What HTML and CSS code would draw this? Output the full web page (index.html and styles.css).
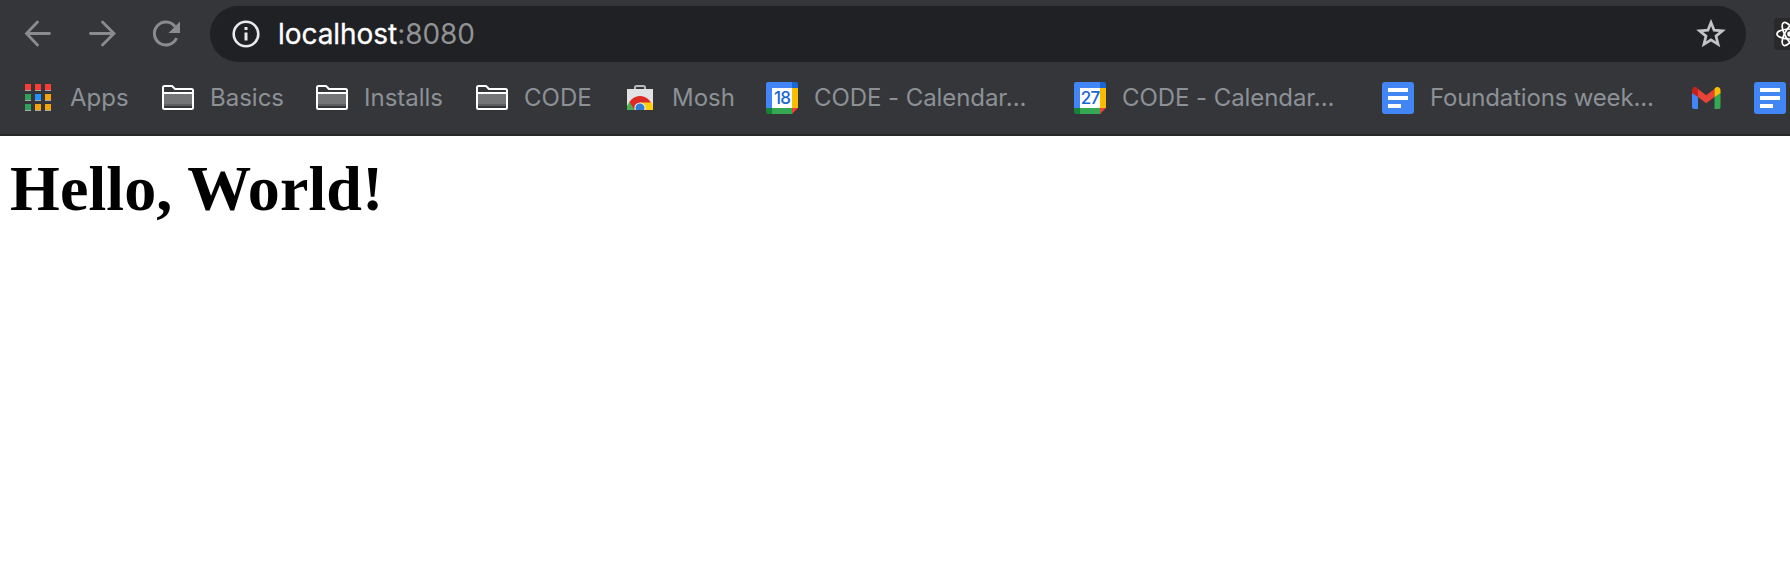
FILE: index.html
```html
<!DOCTYPE html>
<html lang="en">
<head>
<meta charset="utf-8">
<title>localhost:8080</title>
<link rel="stylesheet" href="styles.css">
</head>
<body>
<svg class="defs" width="0" height="0" aria-hidden="true">
  <defs>
    <symbol id="folder" viewBox="0 0 32 32">
      <path d="M2 12h28v10H2z" fill="#747577"/><path d="M2 22h28v2H2z" fill="#5d5e60"/>
      <path d="M1 23.5V5.5Q1 4 2.5 4H10l3 3h16.500Q31 7 31 8.500V25.500Q31 27 29.500 27H2.500Q1 27 1 25.500zM1 11h30" fill="none" stroke="#fff" stroke-width="2"/>
    </symbol>
    <symbol id="calendar" viewBox="0 0 32 32">
      <path d="M2 0h24v6H6v20H0V2Q0 0 2 0z" fill="#4285f4"/>
      <path d="M26 0h4q2 0 2 2v4h-6z" fill="#1967d2"/>
      <path d="M26 6h6v20h-6z" fill="#fbbc04"/>
      <path d="M6 26h20v6H6z" fill="#34a853"/>
      <path d="M0 26h6v6H2q-2 0-2-2z" fill="#188038"/>
      <path d="M26 26h6l-6 6z" fill="#ea4335"/>
      <path d="M6 6h20v20H6z" fill="#fff"/>
    </symbol>
    <symbol id="docs" viewBox="0 0 32 32">
      <rect width="32" height="32" rx="3" fill="#4285f4"/>
      <path d="M6 6h20v4H6zM6 14h20v4H6zM6 22h13v4H6z" fill="#fff"/>
    </symbol>
  </defs>
</svg>
<header class="chrome">
  <div class="toolbar">
    <nav class="controls">
      <svg class="control" viewBox="0 0 32 32" fill="none" stroke="#8a8b8d" stroke-width="2.800"><path d="M27.500 15.500H5M15.500 4L4.500 15.500l11 11.500" stroke-linecap="round"/></svg>
      <svg class="control" viewBox="0 0 32 32" fill="none" stroke="#8a8b8d" stroke-width="2.800"><path d="M4.500 15.500H27.500M16.500 4L28 15.500 16.500 27" stroke-linecap="round"/></svg>
      <svg class="control" viewBox="0 0 32 32"><path d="M25 8.500A11.500 11.500 0 1 0 26.500 20" fill="none" stroke="#8a8b8d" stroke-width="3"/><path d="M30 3.500V15H18.500z" fill="#8a8b8d"/></svg>
    </nav>
    <div class="omnibox">
      <svg class="info" viewBox="0 0 28 28"><circle cx="14" cy="14" r="12.300" fill="none" stroke="#e8eaed" stroke-width="2.600"/><path d="M12.500 7h3v3h-3zM12.500 12.500h3v8h-3z" fill="#e8eaed"/></svg>
      <span class="url"><span class="host">localhost</span>:8080</span>
      <svg class="star" viewBox="0 0 30 30"><path d="M15 3.500l3.100 7.700 8.300.6-6.400 5.300 2.100 8.200L15 20.900l-7.100 4.400L10 17.100 3.600 11.800l8.300-.6z" fill="none" stroke="#c3c4c5" stroke-width="2.700"/></svg>
    </div>
    <svg class="react" viewBox="0 0 32 32"><rect width="32" height="32" rx="3" fill="#29292b"/><g fill="none" stroke="#fff" stroke-width="1.700"><ellipse cx="16" cy="16" rx="13" ry="5"/><ellipse cx="16" cy="16" rx="13" ry="5" transform="rotate(60 16 16)"/><ellipse cx="16" cy="16" rx="13" ry="5" transform="rotate(120 16 16)"/></g><circle cx="16" cy="16" r="2.800" fill="#fff"/></svg>
  </div>
  <nav class="bookmarks">
    <a class="bookmark"><svg class="icon" viewBox="0 0 32 32"><path d="M3 7h6v2H3zM13 7h6v2h-6zM23 7h6v2h-6zM3 17h6v2H3zM13 17h6v2h-6zM23 17h6v2h-6zM3 27h6v2H3zM13 27h6v2h-6zM23 27h6v2h-6z" fill="#aaabad"/><path d="M3 2h6v6H3zM13 2h6v6h-6zM23 2h6v6h-6z" fill="#fa3c35"/><path d="M3 12h6v6H3zM3 22h6v6H3z" fill="#32a058"/><path d="M13 12h6v6h-6z" fill="#2390fa"/><path d="M23 12h6v6h-6zM13 22h6v6h-6zM23 22h6v6h-6z" fill="#f3a30b"/></svg><span class="label">Apps</span></a>
    <a class="bookmark"><svg class="icon"><use href="#folder"/></svg><span class="label">Basics</span></a>
    <a class="bookmark"><svg class="icon"><use href="#folder"/></svg><span class="label">Installs</span></a>
    <a class="bookmark"><svg class="icon"><use href="#folder"/></svg><span class="label">CODE</span></a>
    <a class="bookmark"><svg class="icon" viewBox="0 0 32 32"><clipPath id="bag"><path d="M3 7h26v21H3z"/></clipPath><path d="M11 8V5.500Q11 4 12.500 4h7Q21 4 21 5.500V8" fill="none" stroke="#b9babb" stroke-width="2"/><path d="M3 7h26v21H3z" fill="#e2e2e3"/><g clip-path="url(#bag)"><circle cx="16" cy="26" r="12" fill="#dc2b27"/><path d="M5.500 20L13 32H3V24z" fill="#4bb04f"/><path d="M16 20.500h12L30 32H18z" fill="#ffcf0b"/><circle cx="16" cy="26" r="5.600" fill="#f1f1f1"/><circle cx="16" cy="26" r="4.500" fill="#2d7fd8"/></g></svg><span class="label">Mosh</span></a>
    <a class="bookmark"><svg class="icon"><use href="#calendar"/><text class="day" x="16" y="22">18</text></svg><span class="label label-event">CODE - Calendar...</span></a>
    <a class="bookmark"><svg class="icon"><use href="#calendar"/><text class="day" x="16" y="22">27</text></svg><span class="label label-event">CODE - Calendar...</span></a>
    <a class="bookmark"><svg class="icon"><use href="#docs"/></svg><span class="label label-doc">Foundations week...</span></a>
    <a class="bookmark"><svg class="icon" viewBox="0 0 32 32"><path d="M2 10l6 4.500V27H4q-2 0-2-2z" fill="#4285f4"/><path d="M30.500 10l-6 4.500V27h4q2 0 2-2z" fill="#34a853"/><path d="M8 7l8.200 6.200L24.500 7v8l-8.300 6.300L8 15z" fill="#ea4335"/><path d="M2 11V8.500C2 5 5.500 4 8 6.500V15z" fill="#c5221f"/><path d="M30.500 11V8.500c0-3.500-3.500-4.500-6-2V15z" fill="#fbbc04"/></svg></a>
    <a class="bookmark"><svg class="icon"><use href="#docs"/></svg></a>
  </nav>
</header>
<main class="page"><h1 class="greeting">Hello, World!</h1></main>
</body>
</html>
```

FILE: styles.css
```css
* { box-sizing: border-box; }
body { margin: 0; background: #fff; overflow: hidden; }
svg { display: block; flex: none; }
.defs { position: absolute; }
.chrome {
  height: 136px;
  background: #35363a;
  border-bottom: 2px solid #282828;
  font-family: Inter, Roboto, sans-serif;
  overflow: hidden;
}
.toolbar { display: flex; align-items: center; height: 62px; padding: 6px 0 0 22px; }
.controls { display: flex; flex: none; gap: 32px; width: 188px; }
.control { width: 32px; height: 32px; }
.omnibox {
  display: flex;
  align-items: center;
  width: 1536px;
  height: 56px;
  flex: none;
  padding: 0 20px 0 22px;
  border-radius: 28px;
  background: #202124;
}
.info { width: 28px; height: 28px; }
.url { flex: 1; margin-left: 18px; font-size: 28px; line-height: 56px; color: #919294; letter-spacing: -0.05px; }
.host { color: #fff; -webkit-text-stroke: 0.3px #fff; }
.star { width: 30px; height: 30px; }
.react { width: 32px; height: 32px; margin-left: 28px; }
.bookmarks {
  display: grid;
  grid-template-columns: 140px 154px 160px 148px 142px 308px 308px 308px 64px 36px;
  height: 72px;
  padding-left: 22px;
  align-items: center;
}
.bookmark { display: flex; align-items: center; }
.icon { width: 32px; height: 32px; }
.label { margin-left: 16px; font-size: 24px; line-height: 32px; color: #8c9196; white-space: nowrap; }
.label-event { letter-spacing: -0.07px; }
.label-doc { letter-spacing: -0.17px; }
.day { font-size: 17px; font-weight: 500; fill: #1967d2; text-anchor: middle; letter-spacing: -0.8px; }
.page { padding: 16px 10px; }
.greeting { margin: 0; font: bold 64px/74px "Liberation Serif", serif; letter-spacing: 0.1px; color: #000; }
```
